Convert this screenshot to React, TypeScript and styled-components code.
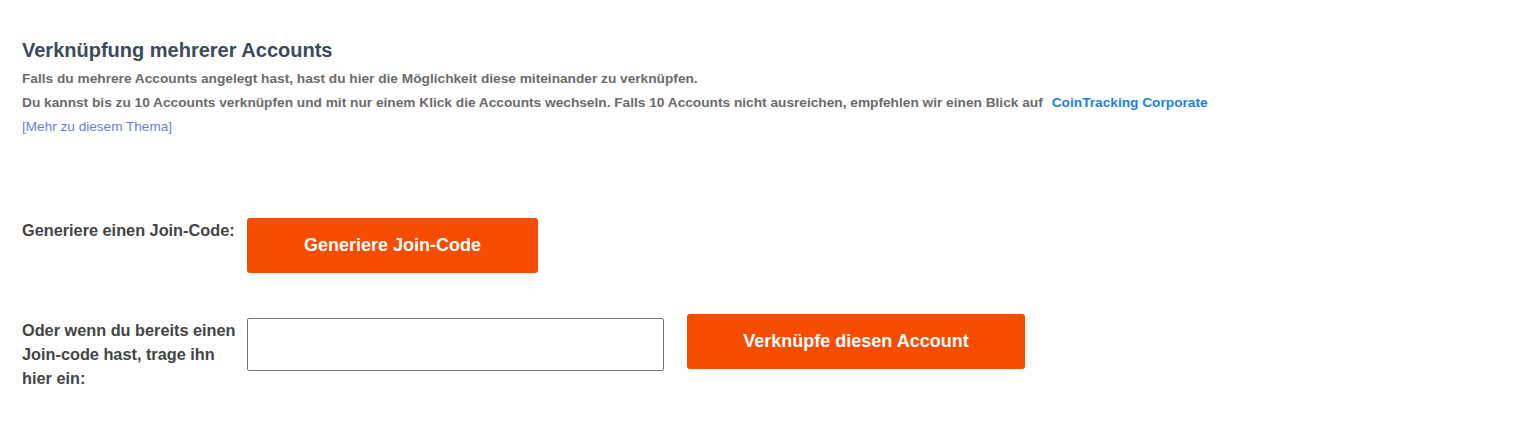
import React, { useState } from "react";
import styled, { createGlobalStyle } from "styled-components";

const GlobalStyle = createGlobalStyle`
  body {
    margin: 0;
    background: #fff;
    font-family: "Liberation Sans", Arial, sans-serif;
  }
`;

export default function App() {
  const [code, setCode] = useState("");

  return (
    <React.Fragment>
      <GlobalStyle />
      <Page>
        <Title>Verknüpfung mehrerer Accounts</Title>
        <Info>
          Falls du mehrere Accounts angelegt hast, hast du hier die Möglichkeit
          diese miteinander zu verknüpfen.
        </Info>
        <Info>
          Du kannst bis zu 10 Accounts verknüpfen und mit nur einem Klick die
          Accounts wechseln. Falls 10 Accounts nicht ausreichen, empfehlen wir
          einen Blick auf
          <CorpLink href="#">CoinTracking Corporate</CorpLink>
        </Info>
        <MoreLink href="#">[Mehr zu diesem Thema]</MoreLink>

        <Form>
          <Row>
            <Label>Generiere einen Join-Code:</Label>
            <ActionButton width={291}>Generiere Join-Code</ActionButton>
          </Row>
          <Row>
            <Label>Oder wenn du bereits einen Join-code hast, trage ihn hier ein:</Label>
            <CodeInput
              value={code}
              onChange={(e) => setCode(e.target.value)}
            />
            <ActionButton width={338} $lift>
              Verknüpfe diesen Account
            </ActionButton>
          </Row>
        </Form>
      </Page>
    </React.Fragment>
  );
}

const Page = styled.div`
  padding: 38px 22px 40px;
`;

const Title = styled.h2`
  margin: 0 0 5px;
  font-size: 20px;
  line-height: 24px;
  font-weight: 700;
  color: #3c4a5c;
`;

const Info = styled.p`
  margin: 0;
  font-size: 13.7px;
  line-height: 24px;
  font-weight: 700;
  color: #6b6b6b;
`;

const CorpLink = styled.a`
  margin-left: 9px;
  color: #1a7fe8;
  text-decoration: none;
`;

const MoreLink = styled.a`
  display: block;
  font-size: 13.6px;
  line-height: 24px;
  color: #6b7fd7;
  text-decoration: none;
`;

const Form = styled.div`
  display: flex;
  flex-direction: column;
  gap: 45px;
  margin-top: 79px;
`;

const Row = styled.div`
  display: flex;
  align-items: flex-start;
`;

const Label = styled.div`
  width: 225px;
  padding-right: 10px;
  box-sizing: border-box;
  font-size: 16.3px;
  line-height: 24px;
  font-weight: 700;
  color: #444;
`;

const ActionButton = styled.button<{ width: number; $lift?: boolean }>`
  width: ${(p) => p.width}px;
  height: 55px;
  margin-top: ${(p) => (p.$lift ? "-4px" : "0")};
  border: none;
  border-radius: 3px;
  background: #f84c00;
  color: #fff;
  font-family: "Liberation Sans", Arial, sans-serif;
  font-size: 18px;
  font-weight: 700;
  cursor: pointer;
`;

const CodeInput = styled.input`
  width: 417px;
  height: 53px;
  box-sizing: border-box;
  margin-right: 23px;
  border: 1px solid #767676;
  border-radius: 2px;
  padding: 0 10px;
  font-size: 15px;
  outline: none;
`;
